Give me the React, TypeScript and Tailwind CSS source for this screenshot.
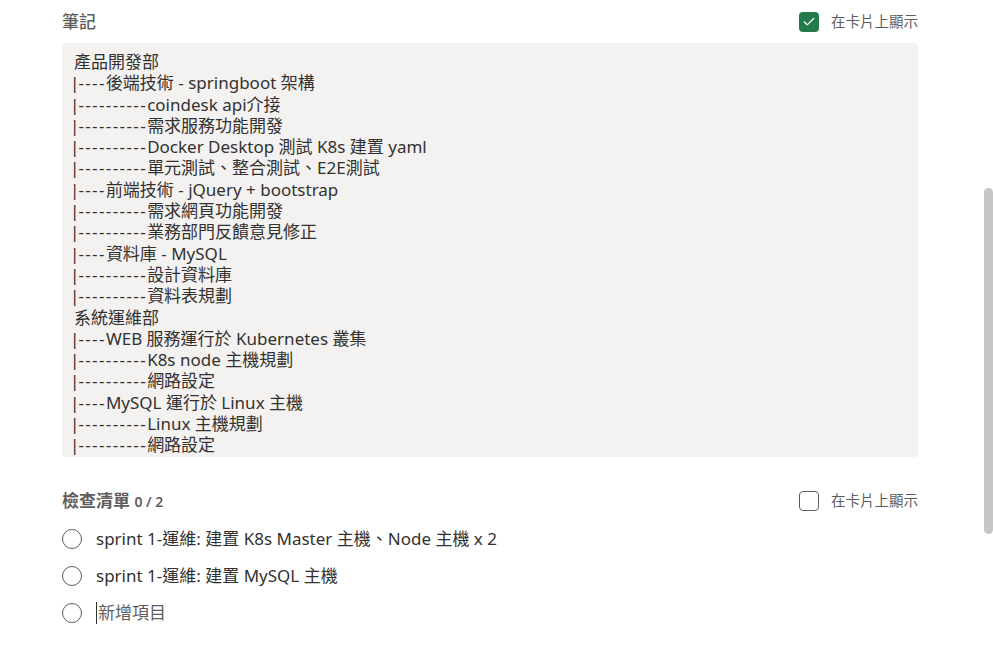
import { Check } from 'lucide-react'

const font = { fontFamily: '"Segoe UI", "Noto Sans", "Noto Sans CJK TC", sans-serif' }

const notes = [
  '產品開發部',
  '|----後端技術 - springboot 架構',
  '|----------coindesk api介接',
  '|----------需求服務功能開發',
  '|----------Docker Desktop 測試 K8s 建置 yaml',
  '|----------單元測試、整合測試、E2E測試',
  '|----前端技術 - jQuery + bootstrap',
  '|----------需求網頁功能開發',
  '|----------業務部門反饋意見修正',
  '|----資料庫 - MySQL',
  '|----------設計資料庫',
  '|----------資料表規劃',
  '系統運維部',
  '|----WEB 服務運行於 Kubernetes 叢集',
  '|----------K8s node 主機規劃',
  '|----------網路設定',
  '|----MySQL 運行於 Linux 主機',
  '|----------Linux 主機規劃',
  '|----------網路設定',
]

const items = ['sprint 1-運維: 建置 K8s Master 主機、Node 主機 x 2', 'sprint 1-運維: 建置 MySQL 主機']

function ShowOnCard({ checked }: { checked: boolean }) {
  return (
    <label className="flex items-center gap-[12px] text-[14.5px] text-[#605e5c]">
      {checked ? (
        <span className="flex h-5 w-5 items-center justify-center rounded-[4px] bg-[#237b4b]">
          <Check className="h-[14px] w-[14px] text-white" strokeWidth={2.2} />
        </span>
      ) : (
        <span className="h-5 w-5 rounded-[4px] border border-[#605e5c] bg-white" />
      )}
      在卡片上顯示
    </label>
  )
}

function NoteLine({ line }: { line: string }) {
  // tree prefix: bar flush left, dashes a bit wider like the original font
  const m = line.match(/^\|(-+)(.*)$/)
  if (m) {
    return (
      <div className="whitespace-pre">
        <span className="-ml-[4px] mr-[-1px]">|</span>
        <span className="tracking-[1.4px]">{m[1]}</span>
        {m[2]}
      </div>
    )
  }
  return <div className="whitespace-pre">{line}</div>
}

export default function App() {
  return (
    <div className="flex h-[647px] w-full overflow-hidden bg-white" style={font}>
      <div className="flex-1 pl-[62px] pr-[66px] pt-[10px]">
        <div className="flex h-6 items-center justify-between">
          <h2 className="text-[17px] font-medium text-[#605e5c]">筆記</h2>
          <ShowOnCard checked />
        </div>
        <div className="mt-[9px] h-[414px] overflow-hidden rounded-[4px] bg-[#f3f2f1] pl-[12px] pr-3 pt-[8px] text-[17px] leading-[21.3px] text-[#323130]">
          {notes.map((line, i) => (
            <NoteLine key={i} line={line} />
          ))}
        </div>

        <div className="mt-[34px] flex h-5 items-center justify-between">
          <h2 className="text-[17px] font-semibold text-[#605e5c]">
            檢查清單 <span className="text-[14px]">0 / 2</span>
          </h2>
          <ShowOnCard checked={false} />
        </div>

        <ul className="mt-[18px] flex flex-col gap-[17px]">
          {items.map((t) => (
            <li key={t} className="flex h-5 items-center gap-[14px]">
              <span className="h-5 w-5 shrink-0 rounded-full border border-[#605e5c]" />
              <span className="text-[17px] text-[#323130]">{t}</span>
            </li>
          ))}
          <li className="flex h-5 items-center gap-[14px]">
            <span className="h-5 w-5 shrink-0 rounded-full border border-[#605e5c]" />
            <span className="flex items-center text-[17px] text-[#605e5c]">
              <span className="mr-[1px] h-[22px] w-px bg-[#323130]" />
              新增項目
            </span>
          </li>
        </ul>
      </div>
      <div className="w-[9px] shrink-0 pt-[188px]">
        <div className="h-[346px] w-[9px] rounded-full bg-[#c8c6c4]" />
      </div>
    </div>
  )
}
